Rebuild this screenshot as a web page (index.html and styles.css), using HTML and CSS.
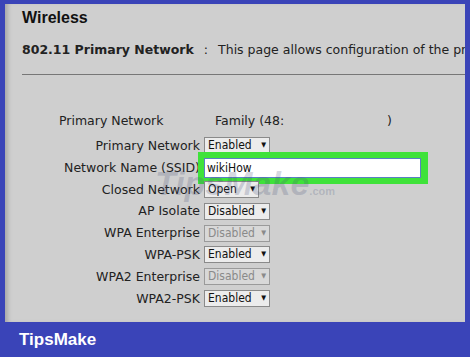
FILE: index.html
```html
<!DOCTYPE html>
<html lang="en">
<head>
    <meta charset="UTF-8">
    <title>Wireless</title>
    <link rel="stylesheet" href="styles.css">
</head>
<body>
    <div class="frame">
        <div class="panel">
            <h1>Wireless</h1>
            <p class="intro"><b>802.11 Primary Network</b><span class="colon">:</span>This page allows configuration of the primary network.</p>
            <hr>

            <div class="family">
                <span class="fam-label">Primary Network</span>
                <span class="fam-value">Family (48:</span>
                <span class="fam-close">)</span>
            </div>

            <!-- settings rows -->
            <div class="form">
                <label>Primary Network</label>
                <div class="sel">Enabled <span class="arrow">&#9660;</span></div>

                <label>Network Name (SSID)</label>
                <div class="ssid">
                    <input type="text" value="wikiHow">
                </div>

                <label>Closed Network</label>
                <div class="sel small">Open <span class="arrow">&#9660;</span></div>

                <label>AP Isolate</label>
                <div class="sel">Disabled <span class="arrow">&#9660;</span></div>

                <label>WPA Enterprise</label>
                <div class="sel off">Disabled <span class="arrow">&#9660;</span></div>

                <label>WPA-PSK</label>
                <div class="sel">Enabled <span class="arrow">&#9660;</span></div>

                <label>WPA2 Enterprise</label>
                <div class="sel off">Disabled <span class="arrow">&#9660;</span></div>

                <label>WPA2-PSK</label>
                <div class="sel">Enabled <span class="arrow">&#9660;</span></div>
            </div>

            <div class="watermark">TipsMake<small>.com</small></div>
        </div>
        <div class="brand">TipsMake</div>
    </div>
</body>
</html>
```
FILE: styles.css
```css
body {
    margin: 0;
    background: #3a44b8;
    font-family: "DejaVu Sans", Verdana, sans-serif;
    color: #222;
}

.frame {
    width: 470px;
    height: 357px;
    padding: 4px 5px 0 5px;
    box-sizing: border-box;
    overflow: hidden;
}

.panel {
    position: relative;
    height: 318px;
    background: #cfcfcf;
    box-shadow: inset 5px 0 4px -2px #a8a8a8;
    padding: 5px 0 0 17px;
    box-sizing: border-box;
    overflow: hidden;
}

h1 {
    margin: 0;
    font-family: "Liberation Sans", Arial, sans-serif;
    font-size: 16px;
    font-weight: bold;
    color: #111;
}

.intro {
    margin: 15px 0 0 0;
    font-size: 12.5px;
    white-space: nowrap;
    color: #222;
}

.colon {
    margin: 0 10px 0 10px;
}

hr {
    margin: 17px 0 0 0;
    border: none;
    border-top: 1px solid #777;
}

.family {
    display: flex;
    margin-top: 38px;
    font-size: 12.5px;
    padding-left: 37px;
}

.fam-label {
    width: 156px;
}

.fam-value {
    width: 172px;
}

.form {
    display: grid;
    grid-template-columns: 178px auto;
    grid-auto-rows: 21.8px;
    column-gap: 4px;
    margin-top: 7px;
    font-size: 12.5px;
}

.form label {
    text-align: right;
    line-height: 21.8px;
    white-space: nowrap;
}

.sel {
    align-self: center;
    justify-self: start;
    width: 58px;
    height: 15px;
    line-height: 15px;
    border: 1px solid #8a8a8a;
    background: #ececec;
    font-family: "DejaVu Sans Condensed", "DejaVu Sans", sans-serif;
    font-size: 12px;
    padding: 0 3px;
    color: #111;
    display: flex;
    justify-content: space-between;
}

.sel.small {
    width: 47px;
}

.sel.off {
    color: #8a8a8a;
    background: #d8d8d8;
    border-color: #9a9a9a;
}

.arrow {
    font-size: 7px;
}

.ssid {
    align-self: center;
    justify-self: start;
    width: 217px;
    margin-left: -6px;
    padding: 6px 7px 6px 6px;
    background: #3fe23a;
}

.ssid input {
    display: block;
    box-sizing: border-box;
    width: 100%;
    height: 20px;
    margin: 0;
    border: 1px solid #5a7fc4;
    background: #fff;
    font-family: "DejaVu Sans Condensed", "DejaVu Sans", sans-serif;
    font-size: 12px;
    padding: 0 2px;
    color: #111;
}

.watermark {
    position: absolute;
    left: 150px;
    top: 160px;
    font-family: "Liberation Sans", Arial, sans-serif;
    font-weight: bold;
    font-style: italic;
    font-size: 34px;
    color: rgba(70, 80, 120, 0.22);
    pointer-events: none;
}

.watermark small {
    font-size: 11px;
    font-style: normal;
}

.brand {
    padding: 8px 0 0 14px;
    font-family: "Liberation Sans", Arial, sans-serif;
    font-weight: bold;
    font-size: 17px;
    color: #fff;
}
```
